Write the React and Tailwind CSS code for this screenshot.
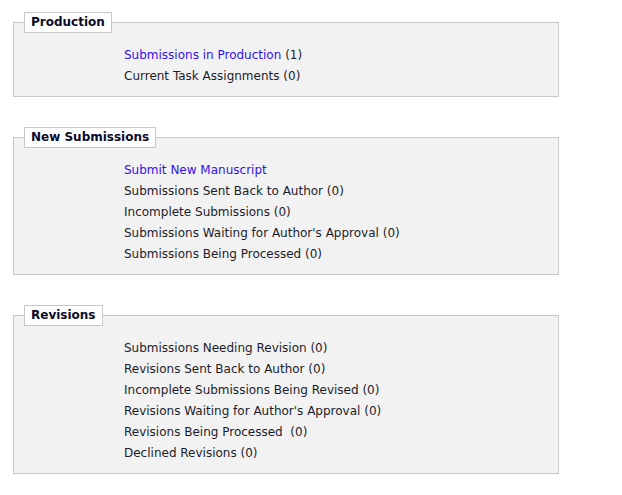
import React from "react";

const sections = [
  {
    title: "Production",
    items: [
      { text: "Submissions in Production", link: true, count: " (1)" },
      { text: "Current Task Assignments (0)" },
    ],
  },
  {
    title: "New Submissions",
    items: [
      { text: "Submit New Manuscript", link: true, count: "" },
      { text: "Submissions Sent Back to Author (0)" },
      { text: "Incomplete Submissions (0)" },
      { text: "Submissions Waiting for Author's Approval (0)" },
      { text: "Submissions Being Processed (0)" },
    ],
  },
  {
    title: "Revisions",
    items: [
      { text: "Submissions Needing Revision (0)" },
      { text: "Revisions Sent Back to Author (0)" },
      { text: "Incomplete Submissions Being Revised (0)" },
      { text: "Revisions Waiting for Author's Approval (0)" },
      { text: "Revisions Being Processed\u00a0 (0)" },
      { text: "Declined Revisions (0)" },
    ],
  },
];

export default function App() {
  return (
    <div
      className="min-h-[495px] bg-white pt-[12px] text-[12px] text-[#1c1c2a]"
      style={{ fontFamily: '"DejaVu Sans", Verdana, sans-serif' }}
    >
      {sections.map((s, i) => (
        <fieldset
          key={s.title}
          className={`ml-[13px] w-[546px] border border-[#c8c8c8] bg-[#f2f2f2] px-[10px] pt-[12px] pb-[9px] ${
            i > 0 ? "mt-[30px]" : ""
          }`}
        >
          <legend className="h-[21px] border border-[#c8c8c8] bg-white px-[6px] text-[12px] font-bold leading-[19px] text-[#0a0a2a]">
            {s.title}
          </legend>
          <div className="ml-[100px] flex flex-col">
            {s.items.map((it) => (
              <div key={it.text} className="h-[21px] leading-[21px]">
                {it.link ? (
                  <>
                    <a href="#" className="text-[#3311ee]">
                      {it.text}
                    </a>
                    {it.count}
                  </>
                ) : (
                  it.text
                )}
              </div>
            ))}
          </div>
        </fieldset>
      ))}
    </div>
  );
}
